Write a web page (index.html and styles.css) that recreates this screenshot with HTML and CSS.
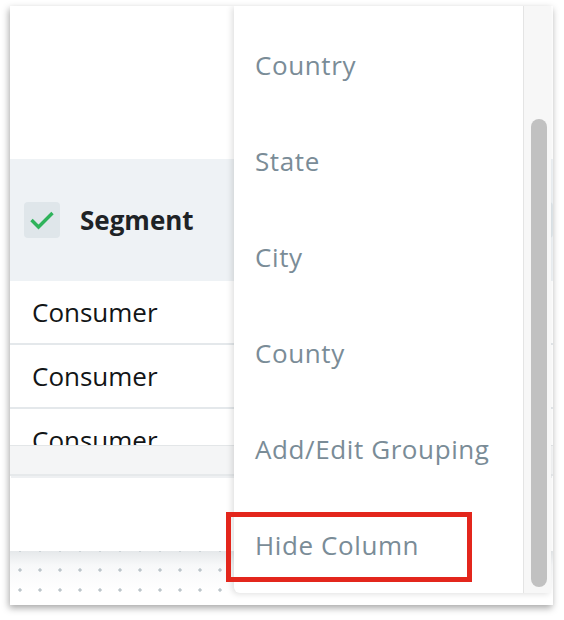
FILE: index.html
```html
<!DOCTYPE html>
<html>
<head>
<meta charset="utf-8">
<link rel="stylesheet" href="styles.css">
</head>
<body>
<div class="frame">
  <div class="table">
    <div class="toolbar"></div>
    <div class="thead">
      <div class="th th-main">
        <span class="check"><svg width="26" height="22" viewBox="0 0 26 22"><path d="M2.5 11 L9.5 18 L23.5 4" fill="none" stroke="#2fb35b" stroke-width="3.4"/></svg></span>
        <span class="th-label">Segment</span>
      </div>
      <div class="th">
        <span class="check"><svg width="26" height="22" viewBox="0 0 26 22"><path d="M2.5 11 L9.5 18 L23.5 4" fill="none" stroke="#2fb35b" stroke-width="3.4"/></svg></span>
      </div>
    </div>
    <div class="rows">
      <div class="row">Consumer</div>
      <div class="row">Consumer</div>
      <div class="row">Consumer</div>
    </div>
    <div class="hscroll"></div>
    <div class="spacer"></div>
    <div class="footer"></div>
  </div>
  <div class="menu">
    <ul class="list">
      <li>Country</li>
      <li>State</li>
      <li>City</li>
      <li>County</li>
      <li>Add/Edit Grouping</li>
      <li>Hide Column</li>
    </ul>
    <div class="track"><div class="thumb"></div></div>
  </div>
  <div class="highlight"></div>
</div>
</body>
</html>
```
FILE: styles.css
```css
html, body {
  margin: 0;
  padding: 0;
  background: #ffffff;
}
body {
  width: 564px;
  height: 620px;
  overflow: hidden;
  font-family: "Open Sans", "Noto Sans", sans-serif;
}
.frame {
  position: relative;
  margin: 6px 0 0 10px;
  width: 543px;
  height: 599px;
  background: #fff;
  box-shadow: -1px 3px 7px rgba(0, 0, 0, 0.35);
  overflow: hidden;
}
.table {
  display: flex;
  flex-direction: column;
  height: 100%;
}
.toolbar {
  height: 153px;
  flex: none;
}
.thead {
  height: 122px;
  flex: none;
  background: #eef2f5;
  display: flex;
}
.th {
  display: flex;
  align-items: center;
  padding-left: 14px;
}
.th-main {
  width: 518px;
}
.check {
  width: 36px;
  height: 36px;
  border-radius: 4px;
  background: #dfe6ea;
  display: flex;
  align-items: center;
  justify-content: center;
}
.th-label {
  margin-left: 20px;
  font-size: 26px;
  font-weight: 700;
  color: #1e2326;
}
.rows {
  height: 164px;
  flex: none;
  overflow: hidden;
}
.row {
  height: 62px;
  border-bottom: 2px solid #e4e8eb;
  display: flex;
  align-items: center;
  padding-left: 22px;
  font-size: 26px;
  color: #121517;
}
.hscroll {
  height: 28px;
  flex: none;
  background: #f4f5f6;
  border-top: 1px solid #e3e6e8;
  border-bottom: 2px solid #e6e9eb;
  margin-bottom: 3px;
  box-shadow: 0 3px 0 -1px #eef0f2;
}
.spacer {
  flex: 1;
}
.footer {
  height: 54px;
  flex: none;
  background:
    radial-gradient(circle, #bcc5ca 1.4px, transparent 1.9px) 0 6px / 20px 20px,
    linear-gradient(#e5e8ea, #f7f8f9 14px, #fff 40px);
  background-position: 0px 9px, 0 0;
}
.menu {
  position: absolute;
  left: 224px;
  top: 0;
  width: 317px;
  height: 587px;
  background: #fff;
  border-bottom-left-radius: 6px;
  box-shadow: -2px 1px 6px rgba(0, 0, 0, 0.13);
  display: flex;
}
.list {
  flex: 1;
  list-style: none;
  margin: 0;
  padding: 11px 0 0 0;
}
.list li {
  height: 96px;
  display: flex;
  align-items: center;
  padding-left: 21px;
  font-size: 26px;
  color: #7a8c97;
  letter-spacing: 0.6px;
}
.track {
  width: 28px;
  flex: none;
  box-sizing: border-box;
  border-left: 1px solid #e4e4e4;
  background: #f7f7f7;
  padding: 113px 4px 6px 7px;
  display: flex;
}
.thumb {
  flex: 1;
  background: #c1c1c1;
  border-radius: 8px;
}
.highlight {
  position: absolute;
  left: 216px;
  top: 506px;
  width: 236px;
  height: 60px;
  border: 5px solid #e3261c;
}
```
